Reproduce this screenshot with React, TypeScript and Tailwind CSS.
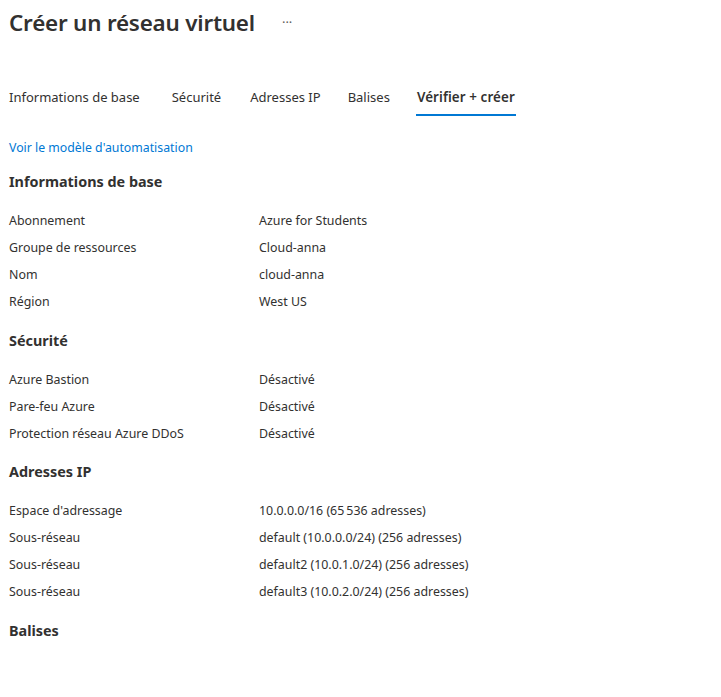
const font = { fontFamily: '"Noto Sans", "Open Sans", sans-serif' };

const tabs = [
  { label: "Informations de base", gap: "" },
  { label: "Sécurité", gap: "ml-[32px]" },
  { label: "Adresses IP", gap: "ml-[29px]" },
  { label: "Balises", gap: "ml-[27px]" },
  { label: "Vérifier + créer", gap: "ml-[27px]" },
];

const sections: { title: string; rows: [string, string][] }[] = [
  {
    title: "Informations de base",
    rows: [
      ["Abonnement", "Azure for Students"],
      ["Groupe de ressources", "Cloud-anna"],
      ["Nom", "cloud-anna"],
      ["Région", "West US"],
    ],
  },
  {
    title: "Sécurité",
    rows: [
      ["Azure Bastion", "Désactivé"],
      ["Pare-feu Azure", "Désactivé"],
      ["Protection réseau Azure DDoS", "Désactivé"],
    ],
  },
  {
    title: "Adresses IP",
    rows: [
      ["Espace d'adressage", "10.0.0.0/16 (65\u202f536 adresses)"],
      ["Sous-réseau", "default (10.0.0.0/24) (256 adresses)"],
      ["Sous-réseau", "default2 (10.0.1.0/24) (256 adresses)"],
      ["Sous-réseau", "default3 (10.0.2.0/24) (256 adresses)"],
    ],
  },
  { title: "Balises", rows: [] },
];

export default function App() {
  return (
    <div className="min-h-[697px] w-[721px] bg-white pl-[9px] text-[#323130]" style={font}>
      <div className="flex items-center pt-[7px]">
        <h1 className="text-[22.4px] font-semibold leading-8 tracking-[-0.2px]">Créer un réseau virtuel</h1>
        <span className="ml-[27px] text-[13px] text-[#605e5c]">···</span>
      </div>

      <div className="mt-[48px] flex text-[13px]">
        {tabs.map((t, i) => {
          const active = i === tabs.length - 1;
          return (
            <div key={t.label} className={`flex flex-col ${t.gap}`}>
              <span className={`leading-5 ${active ? "text-[13.4px] font-semibold tracking-[0.1px]" : ""}`}>{t.label}</span>
              <span className={`-mx-[1px] mt-[7px] h-[2px] ${active ? "bg-[#0078d4]" : ""}`} />
            </div>
          );
        })}
      </div>

      <a className="mt-[22px] block text-[12.3px] leading-5 text-[#0078d4]">Voir le modèle d'automatisation</a>

      {sections.map((s, si) => (
        <div key={s.title}>
          <h2 className={`${si === 0 ? "mt-[14px]" : "mt-[14.5px]"} text-[14.4px] font-bold leading-5`}>{s.title}</h2>
          <div className="mt-[16px] flex flex-col">
            {s.rows.map(([k, v], i) => (
              <div key={i} className="flex h-[27px] items-center text-[12.4px]">
                <span className="w-[250px]">{k}</span>
                <span>{v}</span>
              </div>
            ))}
          </div>
        </div>
      ))}
    </div>
  );
}
